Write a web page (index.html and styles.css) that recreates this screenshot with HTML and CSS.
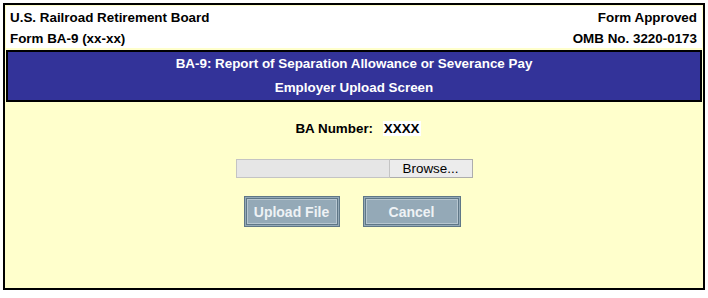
FILE: index.html
```html
<!DOCTYPE html>
<html lang="en">
<head>
    <meta charset="UTF-8">
    <title>BA-9 Employer Upload Screen</title>
    <link rel="stylesheet" href="styles.css">
</head>
<body>

    <div class="form">
        <div class="form__header">
            <div class="form__row">
                <span>U.S. Railroad Retirement Board</span>
                <span>Form Approved</span>
            </div>
            <div class="form__row">
                <span>Form BA-9 (xx-xx)</span>
                <span>OMB No. 3220-0173</span>
            </div>
        </div>

        <div class="form__title">
            <div class="form__title-line">BA-9: Report of Separation Allowance or Severance Pay</div>
            <div class="form__title-line">Employer Upload Screen</div>
        </div>

        <div class="form__body">
            <div class="form__number">
                <span class="form__number-label">BA Number:</span>
                <span class="form__number-value">XXXX</span>
            </div>

            <div class="upload">
                <div class="upload__field"></div>
                <div class="upload__browse">Browse...</div>
            </div>

            <div class="form__actions">
                <button class="form__button form__button--upload" type="button">Upload File</button>
                <button class="form__button form__button--cancel" type="button">Cancel</button>
            </div>
        </div>
    </div>

</body>
</html>
```

FILE: styles.css
```css
html {
    background-color: #fff;
    font-family: "Liberation Sans", Arial, sans-serif;
}

body {
    margin: 3px;
}

.form {
    background-color: #ffffcc;
    border: 2px solid #000;
    display: flex;
    flex-direction: column;
    height: 281px;
    padding: 1px;
}

.form__header {
    background-color: #fff;
    color: #000;
    font-size: 13.4px;
    font-weight: bold;
    padding: 0 5px 0 4px;
}

.form__row {
    align-items: center;
    display: flex;
    height: 20px;
    justify-content: space-between;
}

.form__row:first-child {
    height: 22px;
}

.form__title {
    background-color: #333399;
    border: 2px solid #000;
    color: #fff;
    font-size: 13.4px;
    font-weight: bold;
    margin-top: 2px;
    text-align: center;
}

.form__title-line {
    height: 24px;
    line-height: 24px;
}

.form__body {
    align-items: center;
    display: flex;
    flex-direction: column;
}

.form__number {
    font-size: 13.4px;
    font-weight: bold;
    line-height: 20px;
    margin-top: 17px;
    padding-left: 8px;
}

.form__number-label {
    margin-right: 6px;
}

.form__number-value {
    background-color: #fff;
    padding: 0 1px;
}

.upload {
    display: flex;
    height: 19px;
    margin-top: 20px;
}

.upload__field {
    background-color: #e6e6e6;
    border: 1px solid #c4c4c4;
    width: 152px;
}

.upload__browse {
    background-color: #ececec;
    border: 1px solid #adadad;
    border-left: 0;
    font-size: 13.4px;
    line-height: 17px;
    text-align: center;
    width: 82px;
}

.form__actions {
    display: flex;
    gap: 23px;
    margin-top: 18px;
    padding-right: 4px;
}

.form__button {
    background-color: #94a9b7;
    border: 3px double #5f7787;
    box-shadow: inset 0 0 0 1px #b7c6d0;
    color: #eef2f5;
    font-family: "Liberation Sans", Arial, sans-serif;
    font-size: 14px;
    font-weight: bold;
    height: 31px;
    padding: 0;
}

.form__button--upload {
    width: 96px;
}

.form__button--cancel {
    width: 98px;
}
```
